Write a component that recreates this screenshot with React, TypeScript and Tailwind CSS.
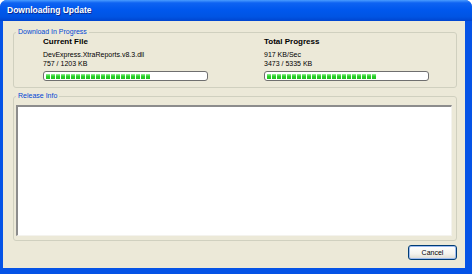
import React from 'react';

const font = { fontFamily: '"Liberation Sans", Arial, sans-serif' };

interface ProgressProps {
  blocks: number;
}

const XpProgress: React.FC<ProgressProps> = ({ blocks }) => (
  <div className="w-[165px] h-[10px] rounded-[3px] border border-[#6f6f6f] bg-white flex items-center px-[2px] gap-px">
    {Array.from({ length: blocks }).map((_, i) => (
      <div key={i} className="w-[4px] h-[5px] bg-[linear-gradient(180deg,#9af09a_0%,#2ad22a_45%,#22c022_100%)]" />
    ))}
  </div>
);

interface ColumnProps {
  title: string;
  line1: string;
  line2: string;
  blocks: number;
}

const Column: React.FC<ColumnProps> = ({ title, line1, line2, blocks }) => (
  <div className="flex flex-col">
    <div className="text-[8px] leading-[9px] font-bold text-black">{title}</div>
    <div className="mt-[4px] text-[7px] leading-[9px] text-black">{line1}</div>
    <div className="text-[7px] leading-[9px] text-black">{line2}</div>
    <div className="mt-[3px]">
      <XpProgress blocks={blocks} />
    </div>
  </div>
);

export default function App() {
  return (
    <div className="w-[472px] h-[274px] bg-white" style={font}>
      <div className="w-full h-full rounded-t-[7px] overflow-hidden bg-[#0553e6] flex flex-col">
        {/* title bar */}
        <div className="h-[21px] shrink-0 flex items-center pl-[7px] bg-[linear-gradient(180deg,#4a9cff_0%,#0e63f2_14%,#0058ee_45%,#0054e3_80%,#0045cf_100%)]">
          <span className="text-white font-bold text-[8.5px] [text-shadow:1px_1px_#0c2a8f]">Downloading Update</span>
        </div>

        {/* body */}
        <div className="flex-1 ml-[3px] mr-[7px] mb-[6px] bg-[#ece9d8] flex flex-col pt-[6px] pl-[10px] pr-[8px]">
          <fieldset className="border border-[#d0d0bf] rounded-[3px]">
            <legend className="text-[7px] leading-[10px] text-[#0046d5] px-[2px] ml-[2px]">Download In Progress</legend>
            <div className="grid grid-cols-[221px_1fr] pl-[29px] pb-[6px]">
              <Column title="Current File" line1="DevExpress.XtraReports.v8.3.dll" line2="757 / 1203 KB" blocks={21} />
              <Column title="Total Progress" line1="917 KB/Sec" line2="3473 / 5335 KB" blocks={22} />
            </div>
          </fieldset>

          <fieldset className="mt-[3px] border border-[#d0d0bf] rounded-[3px]">
            <legend className="text-[7px] leading-[10px] text-[#0046d5] px-[2px] ml-[2px]">Release Info</legend>
            <div className="pl-[2px] pr-[4px] pb-[4px]">
              <div className="mt-[4px] h-[131px] bg-white border-t-2 border-l-2 border-t-[#8c8c8c] border-l-[#8c8c8c] border-r border-b border-r-[#f4f3ee] border-b-[#f4f3ee]" />
            </div>
          </fieldset>

          <div className="mt-[4px] flex justify-end">
            <button className="w-[49px] h-[15px] rounded-[3px] border border-[#003c74] bg-[linear-gradient(180deg,#ffffff_0%,#f4f3ee_60%,#dcdad0_100%)] shadow-[inset_0_0_0_1px_#9ebcf0] text-[7px] leading-[13px] text-black">
              Cancel
            </button>
          </div>
        </div>
      </div>
    </div>
  );
}
